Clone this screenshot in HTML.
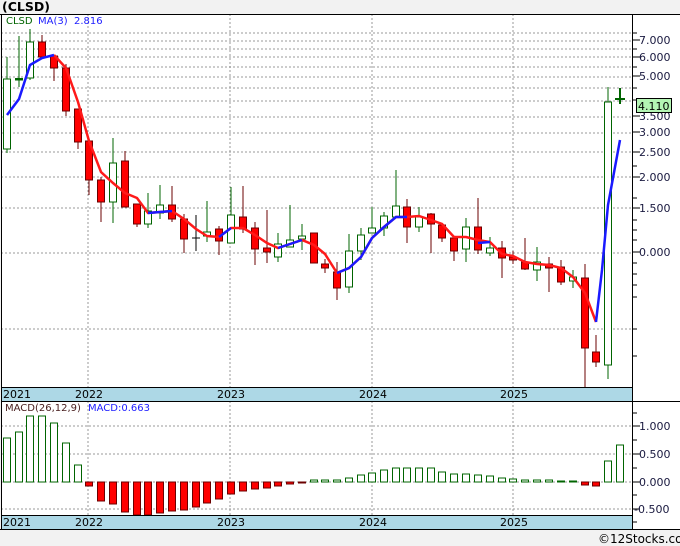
<!DOCTYPE html>
<html><head><meta charset="utf-8"><style>
html,body{margin:0;padding:0;background:#f2f2f2;}
svg{display:block;font-family:"DejaVu Sans","Liberation Sans",sans-serif;}
</style></head><body>
<svg width="680" height="546" viewBox="0 0 680 546" xmlns="http://www.w3.org/2000/svg">
<rect x="0" y="0" width="680" height="546" fill="#f2f2f2"/>
<text x="2" y="11" font-size="12.5" font-weight="bold" fill="#000">(CLSD)</text>
<rect x="1" y="14" width="679" height="516" fill="#fff"/>
<g stroke="#999" stroke-width="1" stroke-dasharray="2,2" fill="none">
<path d="M1 33H632M1 41H632M1 49H632M1 57H632M1 67H632M1 77H632M1 88H632M1 101H632M1 117H632M1 133H632M1 152H632M1 177H632M1 208H632M1 253H632M1 329H632"/>
<path d="M88 14V387M230 14V387M372 14V387M513 14V387"/>
<path d="M1 426H632M1 454H632M1 482H632M1 509H632"/>
<path d="M88 401V515M230 401V515M372 401V515M513 401V515"/>
</g>
<text x="6" y="24" font-size="10" fill="#006400">CLSD</text>
<text x="38" y="24" font-size="10" fill="#2020ff">MA(3)</text>
<text x="74" y="24" font-size="10" fill="#2020ff">2.816</text>
<g id="c" stroke-width="1">
<!-- candles: x, high, top, bottom, low -->
<g stroke="#006400" fill="#fff">
<path d="M7 57V153M19 36V87M30 29V80M113 138V223M148 193V228M160 185V219M207 201V242M231 187V243M278 233V262M290 205V247M302 224V250M349 234V293M361 228V260M372 207V233M384 212V236M396 170V217M419 207V232M466 218V262M490 237V256M537 247V281M573 270V288M608 87V379"/>
<rect x="3.5" y="79" width="7" height="70"/>
<rect x="15.5" y="78.5" width="7" height="1.5" fill="#006400"/>
<rect x="26.5" y="42" width="7" height="36"/>
<rect x="109.5" y="163" width="7" height="39"/>
<rect x="144.5" y="211" width="7" height="13"/>
<rect x="156.5" y="205" width="7" height="8"/>
<rect x="203.5" y="232" width="7" height="4"/>
<rect x="227.5" y="215" width="7" height="28"/>
<rect x="274.5" y="244" width="7" height="13"/>
<rect x="286.5" y="240" width="7" height="7"/>
<rect x="298.5" y="236" width="7" height="3"/>
<rect x="345.5" y="251" width="7" height="36"/>
<rect x="357.5" y="235" width="7" height="16"/>
<rect x="368.5" y="228" width="7" height="5"/>
<rect x="380.5" y="216" width="7" height="12"/>
<rect x="392.5" y="206" width="7" height="11"/>
<rect x="415.5" y="217" width="7" height="10"/>
<rect x="462.5" y="227" width="7" height="22"/>
<rect x="486.5" y="248" width="7" height="5"/>
<rect x="533.5" y="262" width="7" height="8"/>
<rect x="569.5" y="277" width="7" height="4"/>
<rect x="604.5" y="102" width="7" height="263"/>
<path d="M620 88V104M615 99H625" stroke-width="2"/>
</g>
<g stroke="#6b0000" fill="#ff0000">
<path d="M42 35V57M54 55V81M66 64V116M78 109V149M89 141V195M101 177V222M125 151V207M137 204V227M172 186V222M184 214V253M219 226V255M243 186V233M255 222V265M267 210V263M314 233V263M325 259V273M337 262V300M407 199V243M431 213V253M442 224V242M454 238V261M478 198V254M502 241V278M513 251V264M525 238V270M549 257V292M561 260V285M585 264V387M596 335V367"/>
<rect x="38.5" y="42" width="7" height="15"/>
<rect x="50.5" y="56" width="7" height="12"/>
<rect x="62.5" y="68" width="7" height="43"/>
<rect x="74.5" y="109" width="7" height="33"/>
<rect x="85.5" y="141" width="7" height="39"/>
<rect x="97.5" y="180" width="7" height="22"/>
<rect x="121.5" y="161" width="7" height="46"/>
<rect x="133.5" y="204" width="7" height="20"/>
<rect x="168.5" y="205" width="7" height="14"/>
<rect x="180.5" y="219" width="7" height="20"/>
<rect x="215.5" y="229" width="7" height="12"/>
<rect x="239.5" y="217" width="7" height="12"/>
<rect x="251.5" y="228" width="7" height="21"/>
<rect x="263.5" y="248" width="7" height="4"/>
<rect x="310.5" y="233" width="7" height="30"/>
<rect x="321.5" y="264" width="7" height="4"/>
<rect x="333.5" y="272" width="7" height="16"/>
<rect x="403.5" y="207" width="7" height="20"/>
<rect x="427.5" y="214" width="7" height="10"/>
<rect x="438.5" y="225" width="7" height="13"/>
<rect x="450.5" y="238" width="7" height="13"/>
<rect x="474.5" y="227" width="7" height="23"/>
<rect x="498.5" y="248" width="7" height="10"/>
<rect x="509.5" y="257" width="7" height="3"/>
<rect x="521.5" y="262" width="7" height="7"/>
<rect x="545.5" y="264" width="7" height="4"/>
<rect x="557.5" y="267" width="7" height="15"/>
<rect x="581.5" y="278" width="7" height="70"/>
<rect x="592.5" y="352" width="7" height="10"/>
</g>
<path d="M196 215V251M192 238H200" stroke="#000"/>
</g>
<!-- MA line -->
<polyline fill="none" stroke="#ff1a1a" stroke-width="2.5" points="54,55 66,68 78,102 89,141 101,172 113,183 125,193 137,198 148,213 160,212 172,211 184,219 196,229 207,236 219,237 231,228 243,228 255,235 267,243 278,248 290,244 302,240 314,245 325,254 337,273 349,268 361,257 372,238 384,227 396,217 407,217 419,216 431,220 442,224 454,237 466,237 478,240 490,242 502,254 513,256 525,262 537,264 549,265 561,268 573,277 585,293 596,322"/>
<g fill="none" stroke="#1a1aff" stroke-width="2.5">
<polyline points="7,115 19,99 30,65 42,58 54,55"/>
<polyline points="148,213 160,212 172,211"/>
<polyline points="219,237 231,228"/>
<polyline points="278,248 290,244 302,240"/>
<polyline points="337,273 349,268 361,257 372,238 384,227 396,217 407,217"/>
<polyline points="478,243 490,242"/>
<polyline points="596,322 602,270 608,205 620,140"/>
</g>
<!-- MACD bars -->
<g stroke="#006400" fill="#fff">
<rect x="3.5" y="438" width="7" height="44"/><rect x="15.5" y="432" width="7" height="50"/><rect x="26.5" y="416" width="7" height="66"/><rect x="38.5" y="416" width="7" height="66"/><rect x="50.5" y="423" width="7" height="59"/><rect x="62.5" y="443" width="7" height="39"/><rect x="74.5" y="465" width="7" height="17"/>
<rect x="310.5" y="480" width="7" height="2"/><rect x="321.5" y="480" width="7" height="2"/><rect x="333.5" y="480" width="7" height="2"/><rect x="345.5" y="478" width="7" height="4"/><rect x="357.5" y="475" width="7" height="7"/><rect x="368.5" y="473" width="7" height="9"/><rect x="380.5" y="470" width="7" height="12"/><rect x="392.5" y="468" width="7" height="14"/><rect x="403.5" y="468" width="7" height="14"/><rect x="415.5" y="468" width="7" height="14"/><rect x="427.5" y="468" width="7" height="14"/><rect x="438.5" y="472" width="7" height="10"/><rect x="450.5" y="474" width="7" height="8"/><rect x="462.5" y="474" width="7" height="8"/><rect x="474.5" y="475" width="7" height="7"/><rect x="486.5" y="476" width="7" height="6"/><rect x="498.5" y="478" width="7" height="4"/><rect x="509.5" y="479" width="7" height="3"/><rect x="521.5" y="480" width="7" height="2"/><rect x="533.5" y="480" width="7" height="2"/><rect x="545.5" y="480" width="7" height="2"/><rect x="557.5" y="481" width="7" height="1" fill="#006400"/><rect x="569.5" y="481" width="7" height="1" fill="#006400"/>
<rect x="604.5" y="461" width="7" height="21"/><rect x="616.5" y="445" width="7" height="37"/>
</g>
<g stroke="#6b0000" fill="#ff0000">
<rect x="85.5" y="482" width="7" height="4"/><rect x="97.5" y="482" width="7" height="19"/><rect x="109.5" y="482" width="7" height="22"/><rect x="121.5" y="482" width="7" height="30"/><rect x="133.5" y="482" width="7" height="33"/><rect x="144.5" y="482" width="7" height="33"/><rect x="156.5" y="482" width="7" height="31"/><rect x="168.5" y="482" width="7" height="29"/><rect x="180.5" y="482" width="7" height="28"/><rect x="192.5" y="482" width="7" height="25"/><rect x="203.5" y="482" width="7" height="21"/><rect x="215.5" y="482" width="7" height="17"/><rect x="227.5" y="482" width="7" height="12"/><rect x="239.5" y="482" width="7" height="9"/><rect x="251.5" y="482" width="7" height="7"/><rect x="263.5" y="482" width="7" height="6"/><rect x="274.5" y="482" width="7" height="4"/><rect x="286.5" y="482" width="7" height="2"/><rect x="298.5" y="482" width="7" height="1"/>
<rect x="581.5" y="482" width="7" height="3"/><rect x="592.5" y="482" width="7" height="4"/>
</g>
<!-- bands -->
<rect x="1" y="387" width="631" height="14" fill="#add8e6"/>
<rect x="1" y="515" width="631" height="14" fill="#add8e6"/>
<g stroke="#000" fill="none">
<path d="M0 14.5H680M1 387.5H632M1 401.5H680M1 515.5H632M0 529.5H680M1.5 14V530M632.5 14V530"/>
<path d="M632 33h5M632 40h8M632 49h5M632 57h8M632 67h5M632 76h8M632 88h5M632 100h5M632 116h8M632 132h8M632 152h8M632 166h5M632 177h8M632 198h5M632 208h8M632 220h5M632 230h5M632 240h5M632 252h8M632 263h5M632 274h5M632 285h5M632 297h5M632 329h5M632 356h5"/>
<path d="M632 413h5M632 426h8M632 440h5M632 454h8M632 468h5M632 482h8M632 495h5M632 509h8M632 522h5"/>
</g>
<g font-size="11" fill="#000">
<text x="3" y="398">2021</text><text x="75" y="398">2022</text><text x="217" y="398">2023</text><text x="359" y="398">2024</text><text x="500" y="398">2025</text>
<text x="3" y="526">2021</text><text x="75" y="526">2022</text><text x="217" y="526">2023</text><text x="359" y="526">2024</text><text x="500" y="526">2025</text>
</g>
<g font-size="11" fill="#1a1a40">
<text x="639" y="44">7.000</text><text x="639" y="61">6.000</text><text x="639" y="80">5.000</text><text x="639" y="120">3.500</text><text x="639" y="136">3.000</text><text x="639" y="156">2.500</text><text x="639" y="181">2.000</text><text x="639" y="212">1.500</text><text x="639" y="256">0.000</text>
<text x="639" y="430">1.000</text><text x="639" y="458">0.500</text><text x="639" y="486">0.000</text><text x="634" y="513">-0.500</text>
</g>
<rect x="636.5" y="98.5" width="35" height="14" fill="#b4f5b4" stroke="#000"/>
<text x="638" y="110" font-size="11" fill="#000">4.110</text>
<text x="5" y="411" font-size="10" fill="#4a2020">MACD(26,12,9)</text>
<text x="88" y="411" font-size="10" fill="#2020ff">MACD:0.663</text>
<text x="598" y="543" font-size="12" fill="#000">©12Stocks.com</text>
</svg>
</body></html>
